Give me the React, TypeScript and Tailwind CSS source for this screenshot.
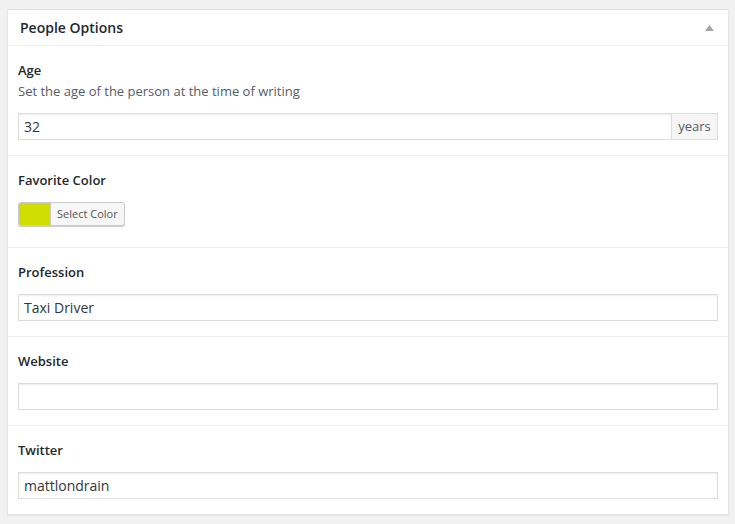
const font = { fontFamily: '"Open Sans", "Noto Sans", sans-serif' };

function Field({
  label,
  children,
  last = false,
}: {
  label: string;
  children: React.ReactNode;
  last?: boolean;
}) {
  return (
    <div className={`px-[10px] pt-[15px] pb-[15px] ${last ? "" : "border-b border-[#eeeeee]"}`}>
      <div className="text-[13px] leading-[19px] font-semibold text-[#23282d]">{label}</div>
      {children}
    </div>
  );
}

function TextInput({ value = "" }: { value?: string }) {
  return (
    <div className="mt-[12px] h-[27px] border border-[#dddddd] bg-white shadow-[inset_0_1px_2px_rgba(0,0,0,0.07)] px-[5px] flex items-center text-[14px] text-[#32373c]">
      {value}
    </div>
  );
}

export default function App() {
  return (
    <div className="min-h-screen bg-[#f1f1f1] pt-[9px] pl-[7px]" style={font}>
      <div className="w-[722px] bg-white border border-[#e5e5e5] shadow-[0_1px_1px_rgba(0,0,0,0.04)]">
        <div className="h-[36px] border-b border-[#eeeeee] flex items-center justify-between pl-[12px] pr-[14px]">
          <span className="text-[14px] font-semibold text-[#23282d]">People Options</span>
          <svg width="9" height="6" viewBox="0 0 9 6" aria-hidden="true">
            <polygon points="4.5,0 9,6 0,6" fill="#a0a5aa" />
          </svg>
        </div>

        <div className="px-[10px] pt-[15px] pb-[15px] border-b border-[#eeeeee]">
          <div className="text-[13px] leading-[19px] font-semibold text-[#23282d]">Age</div>
          <div className="mt-[2px] text-[13px] leading-[19px] text-[#555d66]">
            Set the age of the person at the time of writing
          </div>
          <div className="mt-[12px] flex h-[27px]">
            <div className="flex-1 border border-[#dddddd] shadow-[inset_0_1px_2px_rgba(0,0,0,0.07)] px-[5px] flex items-center text-[14px] text-[#32373c]">
              32
            </div>
            <div className="w-[46px] border border-l-0 border-[#dddddd] bg-[#f5f5f5] flex items-center justify-center text-[13px] text-[#555d66]">
              years
            </div>
          </div>
        </div>

        <div className="px-[10px] pt-[15px] pb-[21px] border-b border-[#eeeeee]">
          <div className="text-[13px] leading-[19px] font-semibold text-[#23282d]">Favorite Color</div>
          <div className="mt-[12px] flex w-fit h-[24px] border border-[#cccccc] rounded-[3px] overflow-hidden shadow-[0_1px_0_#cccccc] bg-[#f7f7f7]">
            <span className="w-[31px] bg-[#d1dc00]" />
            <span className="px-[6px] border-l border-[#cccccc] flex items-center text-[11px] text-[#555555]">
              Select Color
            </span>
          </div>
        </div>

        <Field label="Profession">
          <TextInput value="Taxi Driver" />
        </Field>
        <Field label="Website">
          <TextInput />
        </Field>
        <Field label="Twitter" last>
          <TextInput value="mattlondrain" />
        </Field>
      </div>
    </div>
  );
}
